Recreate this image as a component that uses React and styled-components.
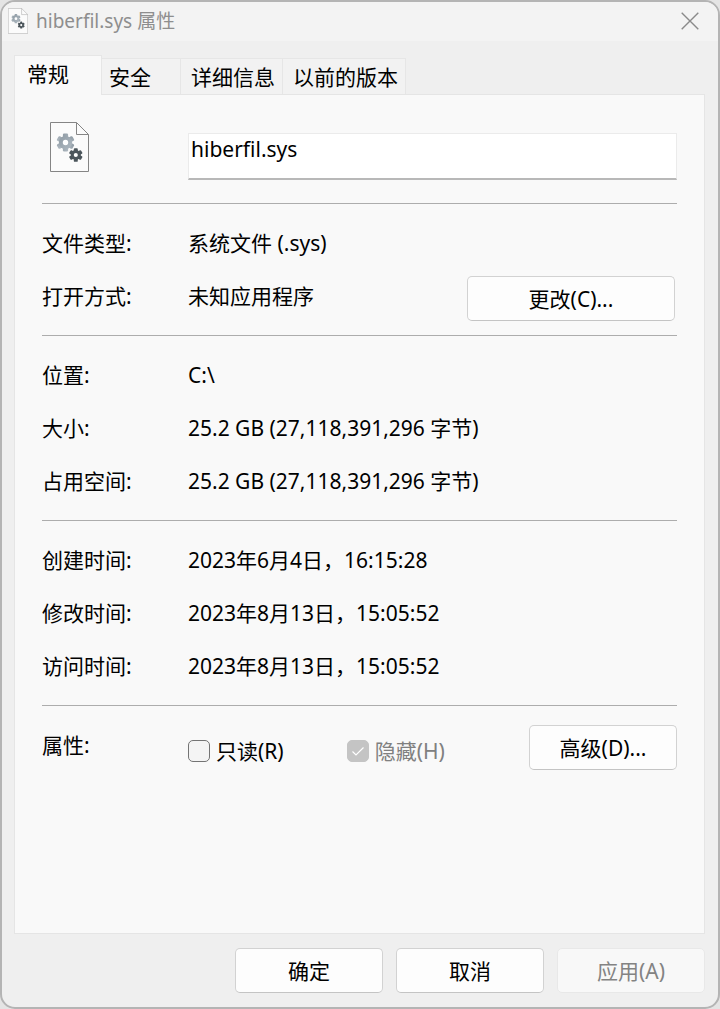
import React, { useId } from "react";
import styled, { createGlobalStyle } from "styled-components";

const GlobalStyle = createGlobalStyle`
    * {
        box-sizing: border-box;
    }
    body {
        margin: 0;
        background-color: #e4e4e4;
    }
    body, button, input {
        font-family: "Noto Sans", "Noto Sans CJK SC", sans-serif;
        font-size: 21px;
        line-height: 28px;
        color: #000000;
    }
`;

const Window = styled.div`
    display: flex;
    flex-direction: column;
    min-height: 100vh;
    border: 2px solid #b4b4b4;
    border-radius: 15px;
    background-color: #efefef;
    overflow: hidden;
`;

const TitleBar = styled.header`
    display: flex;
    align-items: center;
    height: 39px;
    padding: 0 19px 2px 6px;
    background-color: #f3f3f3;
    color: #8e8e8e;
`;

const Title = styled.h1`
    flex: 1;
    margin: 0 0 0 8px;
    font-size: 21px;
    font-weight: 400;
`;

const TitleName = styled.span`
    font-size: 19px;
`;

const CloseButton = styled.button`
    display: flex;
    padding: 0;
    border: none;
    background: none;
    color: #8a8a8a;
`;

const Tabs = styled.div`
    display: flex;
    align-items: flex-end;
    margin: 14px 14px 0 12px;
`;

const Tab = styled.button`
    height: ${(props) => (props.$active ? 40 : 36)}px;
    margin-bottom: ${(props) => (props.$active ? -1 : 0)}px;
    min-width: ${(props) => (props.$active ? 88 : 79)}px;
    padding: ${(props) => (props.$active ? "0 12px 4px" : "0 7px 0 10px")};
    border: 1px solid #e6e6e6;
    border-left-width: ${(props) => (props.$active ? 1 : 0)}px;
    border-bottom: none;
    background-color: ${(props) => (props.$active ? "#f9f9f9" : "#f2f2f2")};
    text-align: left;
    position: relative;
    &:nth-child(2) {
        padding-left: 7px;
    }
`;

const Panel = styled.main`
    flex: 1;
    margin: 0 13px 0 12px;
    padding: 27px 27px 0;
    border: 1px solid #e5e5e5;
    background-color: #f9f9f9;
`;

const FileHeader = styled.div`
    display: grid;
    grid-template-columns: 146px 1fr;
    align-items: start;
    padding-bottom: 23px;
`;

const FileIconBox = styled.div`
    padding-left: 8px;
`;

const NameInput = styled.input`
    width: 100%;
    height: 47px;
    margin-top: 11px;
    padding: 0 2px 14px;
    border: 1px solid #ebebeb;
    border-bottom: 2px solid #b8b8b8;
    background-color: #ffffff;
    outline: none;
`;

const Section = styled.section`
    padding: 12px 0 13px;
    border-top: 1px solid #adadad;
`;

const Row = styled.div`
    display: grid;
    grid-template-columns: 146px 1fr auto;
    align-items: center;
    height: 53px;
`;

const Checks = styled.div`
    display: flex;
    gap: 63px;
    padding-top: 12px;
`;

const CheckLabel = styled.label`
    display: flex;
    align-items: center;
    gap: 6px;
    color: ${(props) => (props.$disabled ? "#808080" : "#000000")};
`;

const CheckWrap = styled.span`
    display: grid;
    width: 22px;
    height: 22px;
`;

const CheckBox = styled.input`
    grid-area: 1 / 1;
    appearance: none;
    width: 22px;
    height: 22px;
    margin: 0;
    border: 1px solid #747474;
    border-radius: 5px;
    background-color: #f4f4f4;
    &:disabled {
        border-color: #c4c4c4;
        background-color: #c4c4c4;
    }
`;

const CheckMark = styled.svg`
    grid-area: 1 / 1;
    pointer-events: none;
`;

const Button = styled.button`
    width: ${(props) => (props.$wide ? 208 : 148)}px;
    height: 45px;
    padding: 0;
    border: 1px solid #d2d2d2;
    border-bottom-color: #c4c4c4;
    border-radius: 5px;
    background-color: #fdfdfd;
    &:disabled {
        border-color: #e8e8e8;
        background-color: #f8f8f8;
        color: #838383;
    }
`;

const RowButton = styled(Button)`
    align-self: end;
    margin: 0 ${(props) => (props.$wide ? 2 : 0)}px 1px 0;
`;

const Footer = styled.footer`
    display: flex;
    justify-content: flex-end;
    gap: 13px;
    padding: 14px 13px;
`;

// three crossed bars give the six teeth
function Gear({ x, y, size, fill }) {
    return (
        <g transform={`translate(${x} ${y}) scale(${size})`}>
            {[0, 60, 120].map((angle) => (
                <rect key={angle} x="-2.6" y="-9" width="5.2" height="18" rx="1.2" fill={fill} transform={`rotate(${angle})`} />
            ))}
            <circle r="6.6" fill={fill} />
            <circle r="2.7" fill="#ffffff" />
        </g>
    );
}

function FileIcon({ width, height, stroke = "#858585" }) {
    const gearId = useId();
    return (
        <svg width={width} height={height} viewBox="0 0 39 50" display="block" aria-hidden="true">
            <defs>
                <linearGradient id={gearId} x1="0" y1="0" x2="1" y2="1">
                    <stop offset="0" stopColor="#8f9ba4" />
                    <stop offset="1" stopColor="#b0bac2" />
                </linearGradient>
            </defs>
            <path d="M.5 .5H26.5L38.5 12.5V49.5H.5Z" fill="#fbfbfb" stroke={stroke} />
            <path d="M26.5 .5V12.5H38.5" fill="none" stroke={stroke} />
            <circle cx="15.5" cy="20.5" r="6" fill="#9da8b0" />
            <Gear x={15.5} y={20.5} size={1} fill={`url(#${gearId})`} />
            <Gear x={25.8} y={33} size={0.76} fill="#4b555b" />
        </svg>
    );
}

function Check({ label, disabled, checked }) {
    return (
        <CheckLabel $disabled={disabled}>
            <CheckWrap>
                <CheckBox type="checkbox" disabled={disabled} defaultChecked={checked} />
                {checked && (
                    <CheckMark width="22" height="22" viewBox="0 0 22 22">
                        <path d="M5.5 11.5L9 15L16.5 7.5" fill="none" stroke="#ffffff" strokeWidth="1.2" />
                    </CheckMark>
                )}
            </CheckWrap>
            {label}
        </CheckLabel>
    );
}

const sizes = [
    ["位置:", "C:\\"],
    ["大小:", "25.2 GB (27,118,391,296 字节)"],
    ["占用空间:", "25.2 GB (27,118,391,296 字节)"],
];

const times = [
    ["创建时间:", "2023年6月4日，16:15:28"],
    ["修改时间:", "2023年8月13日，15:05:52"],
    ["访问时间:", "2023年8月13日，15:05:52"],
];

function Rows({ items }) {
    return items.map(([label, value]) => (
        <Row key={label}>
            <span>{label}</span>
            <span>{value}</span>
        </Row>
    ));
}

function App() {
    return (
        <>
            <GlobalStyle />
            <Window lang="zh-CN">
                <TitleBar>
                    <FileIcon width={20} height={26} stroke="#a4a4a4" />
                    <Title><TitleName>hiberfil.sys 属性</TitleName></Title>
                    <CloseButton aria-label="关闭">
                        <svg width="18" height="18" viewBox="0 0 18 18">
                            <path d="M.7 .7L17.3 17.3M17.3 .7L.7 17.3" stroke="currentColor" strokeWidth="1.4" />
                        </svg>
                    </CloseButton>
                </TitleBar>
                <Tabs role="tablist">
                    <Tab role="tab" aria-selected="true" $active>常规</Tab>
                    <Tab role="tab">安全</Tab>
                    <Tab role="tab">详细信息</Tab>
                    <Tab role="tab">以前的版本</Tab>
                </Tabs>
                <Panel>
                    <FileHeader>
                        <FileIconBox>
                            <FileIcon width={39} height={50} />
                        </FileIconBox>
                        <NameInput aria-label="文件名" defaultValue="hiberfil.sys" />
                    </FileHeader>
                    <Section>
                        <Row>
                            <span>文件类型:</span>
                            <span>系统文件 (.sys)</span>
                        </Row>
                        <Row>
                            <span>打开方式:</span>
                            <span>未知应用程序</span>
                            <RowButton $wide>更改(C)...</RowButton>
                        </Row>
                    </Section>
                    <Section>
                        <Rows items={sizes} />
                    </Section>
                    <Section>
                        <Rows items={times} />
                    </Section>
                    <Section>
                        <Row>
                            <span>属性:</span>
                            <Checks>
                                <Check label="只读(R)" />
                                <Check label="隐藏(H)" disabled checked />
                            </Checks>
                            <RowButton>高级(D)...</RowButton>
                        </Row>
                    </Section>
                </Panel>
                <Footer>
                    <Button>确定</Button>
                    <Button>取消</Button>
                    <Button disabled>应用(A)</Button>
                </Footer>
            </Window>
        </>
    );
}

export default App;
